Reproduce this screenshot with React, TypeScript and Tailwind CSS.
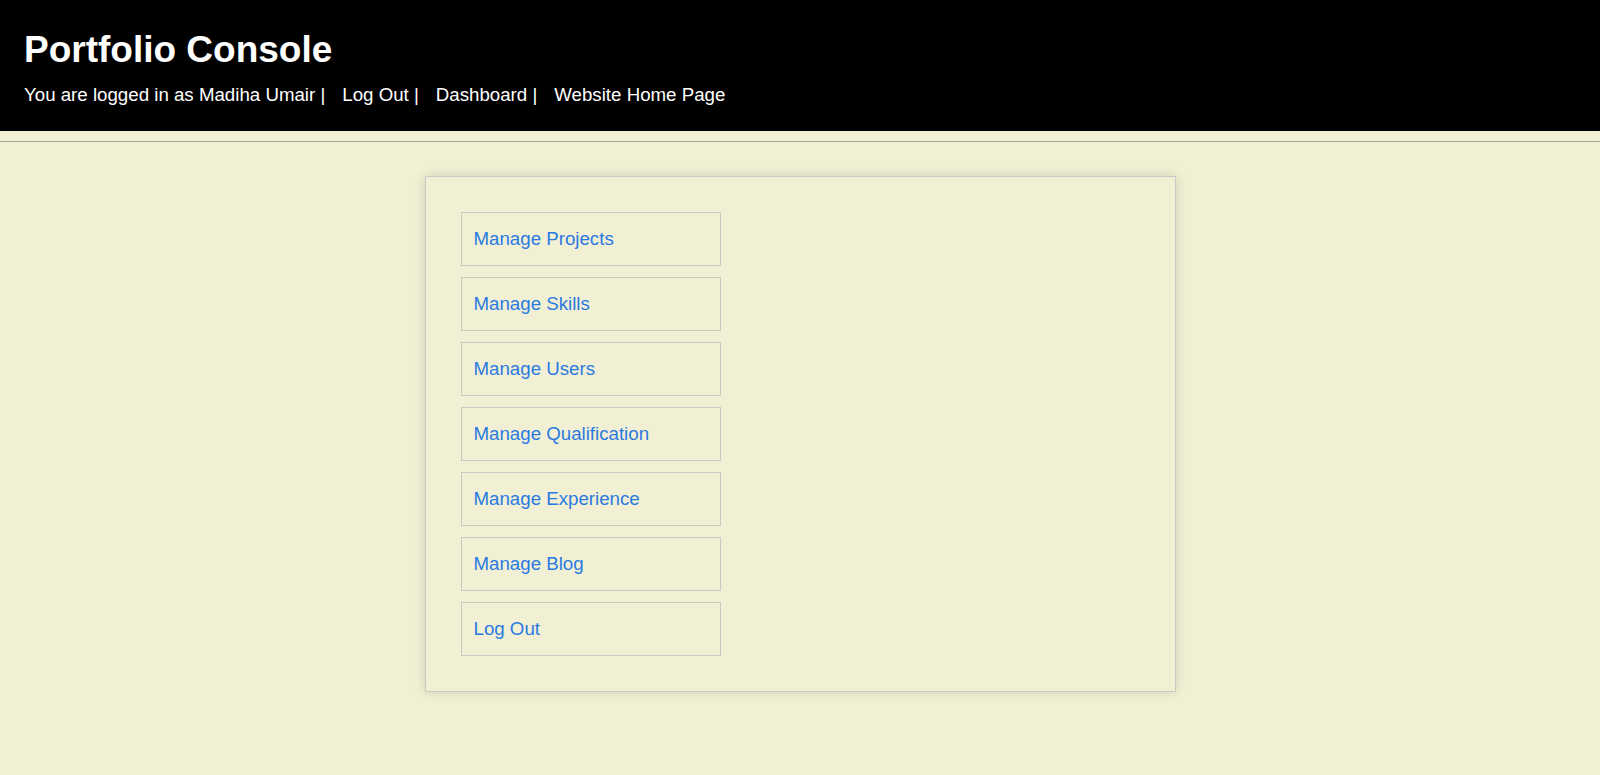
import React from 'react';

const links = [
  'Manage Projects',
  'Manage Skills',
  'Manage Users',
  'Manage Qualification',
  'Manage Experience',
  'Manage Blog',
  'Log Out',
];

export default function App() {
  return (
    <div className="min-h-screen bg-[#f2f0d4] font-['Liberation_Sans',Arial,sans-serif]">
      {/* Header */}
      <header className="h-[131px] bg-black px-[24px] pt-[30px] text-white">
        <h1 className="text-[37px] font-bold leading-[40px]">Portfolio Console</h1>
        <nav className="mt-[13px] flex text-[18.7px] leading-[24px]">
          <span>You are logged in as Madiha Umair |</span>
          <a className="ml-[17px]">Log Out |</a>
          <a className="ml-[17px]">Dashboard |</a>
          <a className="ml-[17px]">Website Home Page</a>
        </nav>
      </header>

      <hr className="mt-[10px] border-t border-[#a9a9a4]" />

      {/* Panel */}
      <div className="flex justify-center pt-[34px]">
        <div className="w-[751px] border border-[#cbcbc6] p-[35px] shadow-[0_0_10px_rgba(0,0,0,0.15)]">
          <ul className="flex flex-col gap-[11px]">
            {links.map((l) => (
              <li key={l}>
                <a className="flex h-[54px] w-[260px] items-center border border-[#c9c9c4] px-[12px] text-[18.7px] text-[#2a7ae2]">
                  {l}
                </a>
              </li>
            ))}
          </ul>
        </div>
      </div>
    </div>
  );
}
